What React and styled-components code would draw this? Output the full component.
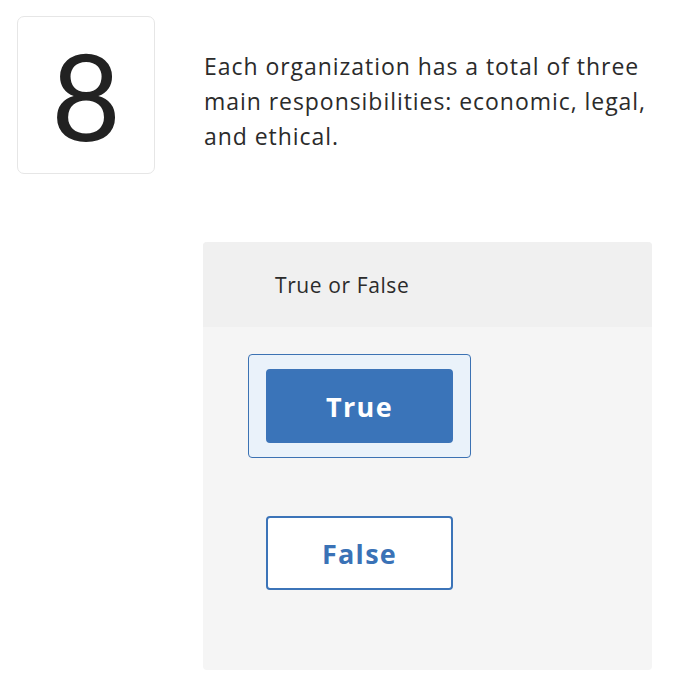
import React, { useState } from "react";
import styled, { createGlobalStyle } from "styled-components";

const GlobalStyle = createGlobalStyle`
  body {
    margin: 0;
    background: #ffffff;
    font-family: "Open Sans", Lato, sans-serif;
    color: #2b2b2b;
  }
`;

const Page = styled.div`
  padding: 16px 17px;
`;

const QuestionRow = styled.div`
  display: flex;
  align-items: flex-start;
`;

const NumberCard = styled.div`
  width: 136px;
  height: 156px;
  flex-shrink: 0;
  border: 1px solid #e6e6e6;
  border-radius: 7px;
  display: flex;
  justify-content: center;
  align-items: center;
  font-family: Lato, sans-serif;
  font-size: 120px;
  font-weight: 400;
  color: #222222;
  line-height: 1;
`;

const QuestionText = styled.p`
  margin: 0 0 0 49px;
  padding-top: 33px;
  max-width: 460px;
  font-size: 23px;
  line-height: 35px;
  letter-spacing: 0.95px;
  color: #2b2b2b;
`;

const Panel = styled.div`
  margin: 68px 0 0 186px;
  width: 449px;
  border-radius: 4px;
  overflow: hidden;
  background: #f5f5f5;
`;

const PanelHeader = styled.div`
  height: 85px;
  background: #f0f0f0;
  display: flex;
  align-items: center;
  padding-left: 72px;
  font-size: 21px;
  letter-spacing: 0.6px;
  color: #2b2b2b;
`;

const Options = styled.div`
  padding: 27px 0 65px 45px;
  display: flex;
  flex-direction: column;
  gap: 43px;
`;

const Choice = styled.div`
  width: 187px;
  padding: 14px 17px;
  border: 1.5px solid ${(p) => (p.$selected ? "#3c72b3" : "transparent")};
  background: ${(p) => (p.$selected ? "#eaf2fa" : "transparent")};
  border-radius: 4px;
`;

const ChoiceButton = styled.button`
  width: 187px;
  height: 74px;
  border-radius: 4px;
  border: 2px solid #3c74b8;
  background: ${(p) => (p.$selected ? "#3a74b9" : "#ffffff")};
  color: ${(p) => (p.$selected ? "#ffffff" : "#3a72b6")};
  font-family: "Open Sans", Lato, sans-serif;
  font-weight: 700;
  font-size: 27px;
  letter-spacing: 1.3px;
  cursor: pointer;
`;

export default function App() {
  const [answer, setAnswer] = useState("True");
  const options = ["True", "False"];

  return (
    <Page>
      <GlobalStyle />
      <QuestionRow>
        <NumberCard>8</NumberCard>
        <QuestionText>
          Each organization has a total of three main responsibilities: economic, legal,
          and ethical.
        </QuestionText>
      </QuestionRow>
      <Panel>
        <PanelHeader>True or False</PanelHeader>
        <Options>
          {options.map((opt) => (
            <Choice key={opt} $selected={answer === opt}>
              <ChoiceButton $selected={answer === opt} onClick={() => setAnswer(opt)}>
                {opt}
              </ChoiceButton>
            </Choice>
          ))}
        </Options>
      </Panel>
    </Page>
  );
}
